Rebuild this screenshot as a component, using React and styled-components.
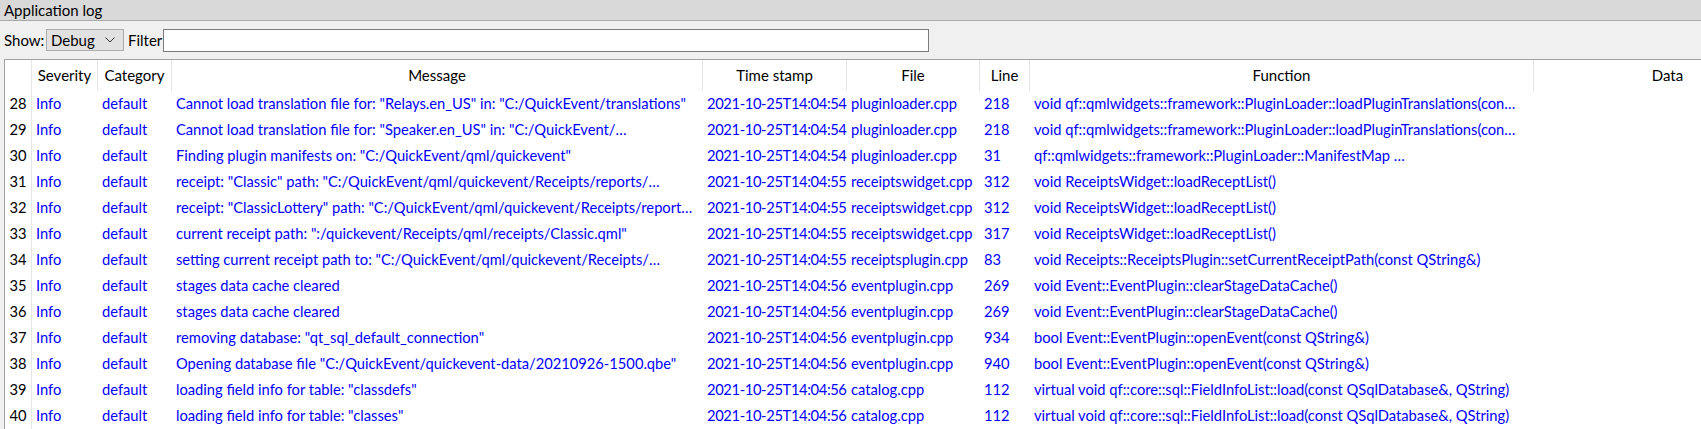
import React from "react";
import styled, { createGlobalStyle } from "styled-components";

const Global = createGlobalStyle`
  html, body { margin: 0; padding: 0; background: #f0f0f0; }
  body { font-family: Lato, "Liberation Sans", sans-serif; font-size: 15px; color: #000; }
  * { box-sizing: border-box; }
`;

const Page = styled.div`
  width: 1701px;
  height: 429px;
  overflow: hidden;
  background: #f0f0f0;
  display: flex;
  flex-direction: column;
`;

const TitleBar = styled.div`
  height: 21px;
  flex: none;
  background: #d9d9d9;
  border-bottom: 1px solid #a9a9a9;
  padding-left: 4px;
  display: flex;
  align-items: center;
  font-size: 15px;
  line-height: 20px;
`;

const Toolbar = styled.div`
  height: 38px;
  flex: none;
  display: flex;
  align-items: center;
  padding: 0 0 0 4px;
`;

const Label = styled.span`
  font-size: 15px;
  width: ${(p) => p.$w}px;
  padding-left: ${(p) => p.$pl || 0}px;
  flex: none;
`;

const Combo = styled.div`
  width: 78px;
  height: 22px;
  flex: none;
  background: #e1e1e1;
  border: 1px solid #adadad;
  display: flex;
  align-items: center;
  justify-content: space-between;
  padding: 0 8px 0 4px;
  font-size: 15px;
`;

const FilterInput = styled.div`
  width: 766px;
  height: 23px;
  flex: none;
  background: #fff;
  border: 1px solid #7a7a7a;
`;

const Frame = styled.div`
  margin-left: 4px;
  flex: 1;
  background: #fff;
  border-top: 1px solid #a0a0a0;
  border-left: 1px solid #a0a0a0;
  overflow: hidden;
`;

const COLS = "27px 66px 74px 531px 144px 133px 50px 504px 268px";

const Grid = styled.div`
  display: grid;
  grid-template-columns: ${COLS};
  width: max-content;
`;

const HeadCell = styled.div`
  height: 31px;
  display: flex;
  align-items: center;
  justify-content: center;
  border-right: 1px solid #e5e5e5;
  white-space: nowrap;
  overflow: hidden;
  padding-bottom: 1px;
  font-size: 15px;
`;

const RowNum = styled.div`
  height: 26px;
  display: flex;
  align-items: center;
  justify-content: center;
  border-right: 1px solid #e5e5e5;
  font-size: 14.7px;
  padding-bottom: 2px;
`;

const Cell = styled.div`
  height: 26px;
  display: flex;
  align-items: center;
  padding-left: 4px;
  padding-bottom: 2px;
  color: #0000ff;
  white-space: nowrap;
  overflow: hidden;
  font-size: 14.7px;
  letter-spacing: ${(p) => (p.$tight ? "-0.35px" : "normal")};
`;

const Chevron = () => (
  <svg width="10" height="6" viewBox="0 0 10 6">
    <path d="M0.5 0.5 L5 5 L9.5 0.5" fill="none" stroke="#333" strokeWidth="1" />
  </svg>
);

const headers = ["Severity", "Category", "Message", "Time stamp", "File", "Line", "Function", "Data"];

const rows = [
  [28, 'Cannot load translation file for: "Relays.en_US" in: "C:/QuickEvent/translations"', "2021-10-25T14:04:54", "pluginloader.cpp", "218", "void qf::qmlwidgets::framework::PluginLoader::loadPluginTranslations(con…"],
  [29, 'Cannot load translation file for: "Speaker.en_US" in: "C:/QuickEvent/…', "2021-10-25T14:04:54", "pluginloader.cpp", "218", "void qf::qmlwidgets::framework::PluginLoader::loadPluginTranslations(con…"],
  [30, 'Finding plugin manifests on: "C:/QuickEvent/qml/quickevent"', "2021-10-25T14:04:54", "pluginloader.cpp", "31", "qf::qmlwidgets::framework::PluginLoader::ManifestMap …"],
  [31, 'receipt: "Classic" path: "C:/QuickEvent/qml/quickevent/Receipts/reports/…', "2021-10-25T14:04:55", "receiptswidget.cpp", "312", "void ReceiptsWidget::loadReceptList()"],
  [32, 'receipt: "ClassicLottery" path: "C:/QuickEvent/qml/quickevent/Receipts/report…', "2021-10-25T14:04:55", "receiptswidget.cpp", "312", "void ReceiptsWidget::loadReceptList()"],
  [33, 'current receipt path: ":/quickevent/Receipts/qml/receipts/Classic.qml"', "2021-10-25T14:04:55", "receiptswidget.cpp", "317", "void ReceiptsWidget::loadReceptList()"],
  [34, 'setting current receipt path to: "C:/QuickEvent/qml/quickevent/Receipts/…', "2021-10-25T14:04:55", "receiptsplugin.cpp", "83", "void Receipts::ReceiptsPlugin::setCurrentReceiptPath(const QString&)"],
  [35, "stages data cache cleared", "2021-10-25T14:04:56", "eventplugin.cpp", "269", "void Event::EventPlugin::clearStageDataCache()"],
  [36, "stages data cache cleared", "2021-10-25T14:04:56", "eventplugin.cpp", "269", "void Event::EventPlugin::clearStageDataCache()"],
  [37, 'removing database: "qt_sql_default_connection"', "2021-10-25T14:04:56", "eventplugin.cpp", "934", "bool Event::EventPlugin::openEvent(const QString&)"],
  [38, 'Opening database file "C:/QuickEvent/quickevent-data/20210926-1500.qbe"', "2021-10-25T14:04:56", "eventplugin.cpp", "940", "bool Event::EventPlugin::openEvent(const QString&)"],
  [39, 'loading field info for table: "classdefs"', "2021-10-25T14:04:56", "catalog.cpp", "112", "virtual void qf::core::sql::FieldInfoList::load(const QSqlDatabase&, QString)"],
  [40, 'loading field info for table: "classes"', "2021-10-25T14:04:56", "catalog.cpp", "112", "virtual void qf::core::sql::FieldInfoList::load(const QSqlDatabase&, QString)"],
];

export default function App() {
  return (
    <Page>
      <Global />
      <TitleBar>Application log</TitleBar>
      <Toolbar>
        <Label $w={42}>Show:</Label>
        <Combo>
          <span>Debug</span>
          <Chevron />
        </Combo>
        <Label $w={39} $pl={4}>Filter</Label>
        <FilterInput />
      </Toolbar>
      <Frame>
        <Grid>
          <HeadCell />
          {headers.map((h) => (
            <HeadCell key={h}>{h}</HeadCell>
          ))}
          {rows.map(([n, msg, ts, file, line, fn]) => (
            <React.Fragment key={n}>
              <RowNum>{n}</RowNum>
              <Cell>Info</Cell>
              <Cell>default</Cell>
              <Cell>{msg}</Cell>
              <Cell $tight>{ts}</Cell>
              <Cell>{file}</Cell>
              <Cell>{line}</Cell>
              <Cell>{fn}</Cell>
              <Cell />
            </React.Fragment>
          ))}
        </Grid>
      </Frame>
    </Page>
  );
}
